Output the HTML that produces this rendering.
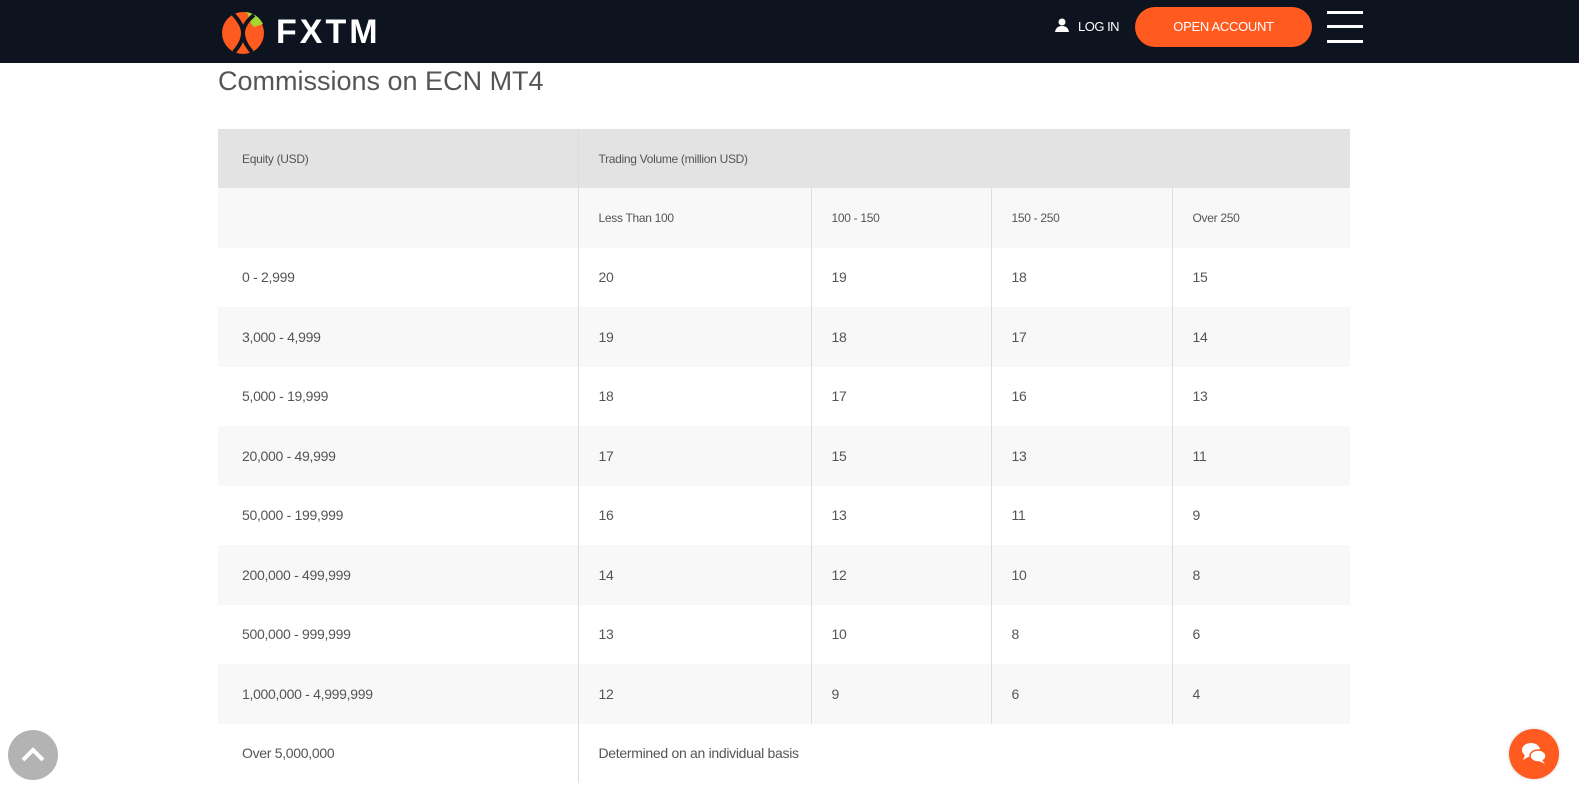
<!DOCTYPE html>
<html><head><meta charset="utf-8"><style>
*{margin:0;padding:0;box-sizing:border-box}
body{width:1579px;height:792px;overflow:hidden;background:#fff;font-family:"Liberation Sans",sans-serif;color:#555;position:relative}
.hdr{position:absolute;left:0;top:0;width:1579px;height:63px;background:#0e141f}
.logo{position:absolute;left:221px;top:10px}
.fxtm{position:absolute;left:276px;top:12px;color:#fff;font-size:34px;font-weight:bold;letter-spacing:3px;line-height:40px}
.login{position:absolute;left:1078px;top:19px;color:#fff;font-size:13px;line-height:16px;letter-spacing:-.5px}
.btn{position:absolute;left:1135px;top:7px;width:177px;height:40px;border-radius:20px;background:#ff5a1f;color:#fff;font-size:13px;text-align:center;line-height:40px;letter-spacing:-.3px}
.ham{position:absolute;left:1327px;width:36px;height:3px;background:#fff}
h1{position:absolute;left:218px;top:66px;font-size:27px;font-weight:normal;color:#555}
table{position:absolute;left:218px;top:129px;width:1132px;border-collapse:collapse}
td{height:59.5px;padding-left:24px;font-size:14px;vertical-align:middle;letter-spacing:-.3px}
td+td{border-left:1px solid #ddd;padding-left:20px}
tr.h td{background:#e3e3e3;font-size:12px;height:59px}
tr.s td{font-size:12px}
tr.g td{background:#f8f8f8}
.up{position:absolute;left:8px;top:730px;width:50px;height:50px;border-radius:50%;background:#b3b3b3}
.chat{position:absolute;left:1509px;top:729px;width:50px;height:50px;border-radius:50%;background:#ff5a1f;box-shadow:0 0 3px #ccc}
</style></head><body>
<div class="hdr">
<svg class="logo" width="46" height="44" viewBox="0 0 46 44">
<circle cx="22" cy="23" r="21" fill="#ff5a1f"/>
<path d="M24 2 A21 21 0 0 1 42 14 L33 17 Q27 11 27 4 Z" fill="#a6d730"/>
<path d="M11 3 Q22 14 22 23 Q22 32 13 42 M33 5 Q22 14 22 23 Q22 32 31 42" stroke="#0e141f" stroke-width="4" fill="none"/>
</svg>
<div class="fxtm">FXTM</div>
<svg style="position:absolute;left:1055px;top:18px" width="14" height="14" viewBox="0 0 14 14"><circle cx="7" cy="4" r="3.5" fill="#fff"/><path d="M0 14 Q1 8 7 8 Q13 8 14 14Z" fill="#fff"/></svg>
<div class="login">LOG IN</div>
<div class="btn">OPEN ACCOUNT</div>
<div class="ham" style="top:11px"></div><div class="ham" style="top:25px"></div><div class="ham" style="top:40px"></div>
</div>
<h1>Commissions on ECN MT4</h1>
<table>
<colgroup><col style="width:360px"><col style="width:233px"><col style="width:180px"><col style="width:181px"><col></colgroup>
<tr class="h"><td>Equity (USD)</td><td colspan="4">Trading Volume (million USD)</td></tr>
<tr class="s g"><td></td><td>Less Than 100</td><td>100 - 150</td><td>150 - 250</td><td>Over 250</td></tr>
<tr><td>0 - 2,999</td><td>20</td><td>19</td><td>18</td><td>15</td></tr>
<tr class="g"><td>3,000 - 4,999</td><td>19</td><td>18</td><td>17</td><td>14</td></tr>
<tr><td>5,000 - 19,999</td><td>18</td><td>17</td><td>16</td><td>13</td></tr>
<tr class="g"><td>20,000 - 49,999</td><td>17</td><td>15</td><td>13</td><td>11</td></tr>
<tr><td>50,000 - 199,999</td><td>16</td><td>13</td><td>11</td><td>9</td></tr>
<tr class="g"><td>200,000 - 499,999</td><td>14</td><td>12</td><td>10</td><td>8</td></tr>
<tr><td>500,000 - 999,999</td><td>13</td><td>10</td><td>8</td><td>6</td></tr>
<tr class="g"><td>1,000,000 - 4,999,999</td><td>12</td><td>9</td><td>6</td><td>4</td></tr>
<tr><td>Over 5,000,000</td><td colspan="4">Determined on an individual basis</td></tr>
</table>
<div class="up"><svg width="50" height="50" viewBox="0 0 50 50"><path d="M15 30 L25 20 L35 30" stroke="#fff" stroke-width="4" fill="none"/></svg></div>
<div class="chat"><svg width="50" height="50" viewBox="0 0 50 50"><ellipse cx="22" cy="21" rx="9" ry="7" fill="#fff"/><path d="M16 26 L14 31 L21 27Z" fill="#fff"/><ellipse cx="29" cy="27" rx="8" ry="6" fill="#fff" stroke="#ff5a1f" stroke-width="1.5"/><path d="M33 31 L36 35 L30 32Z" fill="#fff"/></svg></div>
</body></html>
